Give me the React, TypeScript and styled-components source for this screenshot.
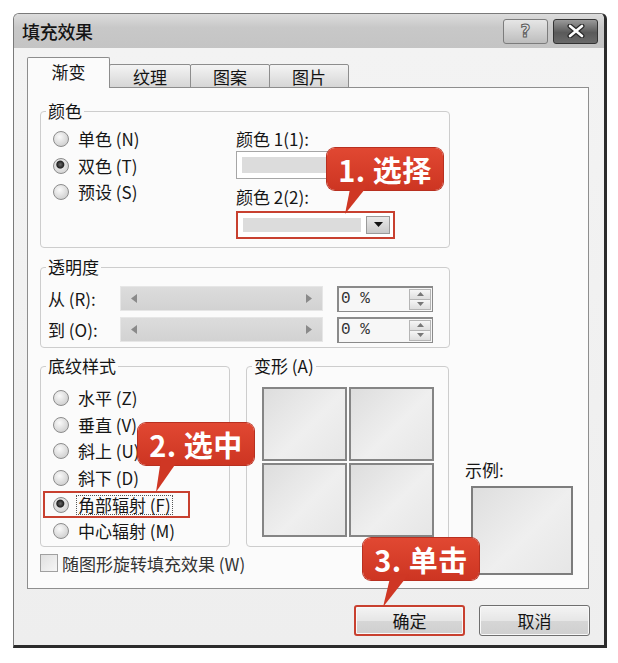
import React from 'react'
import styled, { createGlobalStyle } from 'styled-components'

const GlobalStyle = createGlobalStyle`
  html, body {
    margin: 0;
    padding: 0;
    background: #ffffff;
  }
  body {
    font-family: "Noto Sans CJK SC", "Noto Sans", sans-serif;
    color: #161616;
  }
  * {
    box-sizing: border-box;
  }
`

const patterns = [
  { label: '水平 (Z)' },
  { label: '垂直 (V)' },
  { label: '斜上 (U)' },
  { label: '斜下 (D)' },
  { label: '角部辐射 (F)', checked: true, highlight: true },
  { label: '中心辐射 (M)' },
]

const tabs = ['渐变', '纹理', '图案', '图片']

type CalloutProps = {
  x: number
  y: number
  tail: [number, number, number, number]
  text: string
}

const Callout = ({ x, y, tail, text }: CalloutProps) => {
  const [b1, b2, tx, ty] = tail
  return (
    <Bubble $x={x} $y={y}>
      <Tail width="60" height="80" viewBox="0 0 60 80">
        <polygon points={`${b1},36 ${b2},36 ${tx},${ty}`} fill="#cf3724" />
      </Tail>
      <BubbleText>{text}</BubbleText>
    </Bubble>
  )
}

export default function App() {
  return (
    <Page>
      <GlobalStyle />
      <Window>
        <TitleBar>
          <Title>填充效果</Title>
          <CaptionButtons>
            <HelpButton>?</HelpButton>
            <CloseButton>
              <svg width="18" height="14" viewBox="0 0 18 14">
                <path d="M3 2 L15 12 M15 2 L3 12" stroke="#2a2a2a" strokeWidth="5" strokeLinecap="round" />
                <path d="M3 2 L15 12 M15 2 L3 12" stroke="#ffffff" strokeWidth="2.6" strokeLinecap="round" />
              </svg>
            </CloseButton>
          </CaptionButtons>
        </TitleBar>

        <Client>
          <TabStrip>
            {tabs.map((t, i) => (
              <Tab key={t} $active={i === 0} $w={i === 0 ? 83 : i === 1 ? 82 : 80}>
                {t}
              </Tab>
            ))}
          </TabStrip>

          <Panel>
            <Field>
              <Legend>颜色</Legend>
              <ColorBody>
                <RadioList>
                  <RadioRow>
                    <Radio />
                    <span>单色 (N)</span>
                  </RadioRow>
                  <RadioRow>
                    <Radio $checked />
                    <span>双色 (T)</span>
                  </RadioRow>
                  <RadioRow>
                    <Radio />
                    <span>预设 (S)</span>
                  </RadioRow>
                </RadioList>
                <ColorColumn>
                  <SmallLabel>颜色 1(1):</SmallLabel>
                  <ColorBox>
                    <ColorFill />
                  </ColorBox>
                  <SmallLabel $gap>颜色 2(2):</SmallLabel>
                  <ColorBox $highlight>
                    <ColorFill />
                    <DropButton>
                      <svg width="9" height="6" viewBox="0 0 9 6">
                        <polygon points="0,0 9,0 4.5,5" fill="#111" />
                      </svg>
                    </DropButton>
                  </ColorBox>
                </ColorColumn>
              </ColorBody>
            </Field>

            <Field>
              <Legend>透明度</Legend>
              <AlphaBody>
                {['从 (R):', '到 (O):'].map((l) => (
                  <AlphaRow key={l}>
                    <AlphaLabel>{l}</AlphaLabel>
                    <Slider>
                      <svg width="6" height="9" viewBox="0 0 6 9">
                        <polygon points="6,0 6,9 0,4.5" fill="#8a8a8a" />
                      </svg>
                      <svg width="6" height="9" viewBox="0 0 6 9">
                        <polygon points="0,0 0,9 6,4.5" fill="#8a8a8a" />
                      </svg>
                    </Slider>
                    <Spin>
                      <SpinValue>0 %</SpinValue>
                      <SpinArrows>
                        <SpinHalf>
                          <svg width="7" height="4" viewBox="0 0 7 4">
                            <polygon points="0,4 7,4 3.5,0" fill="#777" />
                          </svg>
                        </SpinHalf>
                        <SpinHalf>
                          <svg width="7" height="4" viewBox="0 0 7 4">
                            <polygon points="0,0 7,0 3.5,4" fill="#777" />
                          </svg>
                        </SpinHalf>
                      </SpinArrows>
                    </Spin>
                  </AlphaRow>
                ))}
              </AlphaBody>
            </Field>

            <BottomGrid>
              <Field $area="pattern">
                <Legend>底纹样式</Legend>
                <PatternBody>
                  {patterns.map((p) => (
                    <RadioRow key={p.label} $highlight={p.highlight} $h={26.6}>
                      <Radio $checked={p.checked} />
                      <FocusText $focus={p.checked}>{p.label}</FocusText>
                    </RadioRow>
                  ))}
                </PatternBody>
              </Field>

              <Field $area="shape">
                <Legend>变形 (A)</Legend>
                <ShapeGrid>
                  <Variant />
                  <Variant />
                  <Variant />
                  <Variant />
                </ShapeGrid>
              </Field>

              <SampleColumn>
                <SampleLabel>示例:</SampleLabel>
                <SampleBox />
              </SampleColumn>

              <CheckRow>
                <CheckBox />
                <span>随图形旋转填充效果 (W)</span>
              </CheckRow>
            </BottomGrid>
          </Panel>

          <ButtonRow>
            <DialogButton $highlight>确定</DialogButton>
            <DialogButton>取消</DialogButton>
          </ButtonRow>
        </Client>

        <Callout x={313} y={134} tail={[24, 42, 18, 66]} text="1. 选择" />
        <Callout x={124} y={409} tail={[23, 41, 18, 69]} text="2. 选中" />
        <Callout x={349} y={524} tail={[28, 46, 20, 69]} text="3. 单击" />
      </Window>
    </Page>
  )
}

const Page = styled.div`
  width: 618px;
  height: 663px;
  padding: 13px 11px 15px 13px;
`

const Window = styled.div`
  position: relative;
  width: 594px;
  height: 635px;
  display: flex;
  flex-direction: column;
  border: 1px solid #7a7a7a;
  border-right: 3px solid #2c2c2c;
  border-bottom: 3px solid #2c2c2c;
  border-radius: 6px 6px 0 0;
  background: #efefef;
`

const TitleBar = styled.div`
  height: 34px;
  flex: none;
  display: flex;
  align-items: center;
  justify-content: space-between;
  padding: 0 6px 0 8px;
  border-radius: 5px 5px 0 0;
  background: linear-gradient(#dcdcdc 0%, #c8c8c8 40%, #c4c4c4 100%);
`

const Title = styled.div`
  font-size: 18px;
  font-weight: 500;
  color: #141414;
  letter-spacing: -0.3px;
`

const CaptionButtons = styled.div`
  display: flex;
  gap: 5px;
`

const CaptionButton = styled.div`
  width: 45px;
  height: 25px;
  display: flex;
  align-items: center;
  justify-content: center;
  border-radius: 3px;
`

const HelpButton = styled(CaptionButton)`
  border: 1px solid #7c7c7c;
  background: linear-gradient(#e6e6e6, #bdbdbd);
  font-family: "DejaVu Sans", sans-serif;
  font-size: 17px;
  font-weight: 700;
  color: #e2e2e2;
  -webkit-text-stroke: 1px #5a5a5a;
`

const CloseButton = styled(CaptionButton)`
  border: 1px solid #333;
  background: linear-gradient(#9a9a9a, #5a5a5a 55%, #6a6a6a);
`

const Client = styled.div`
  flex: 1;
  display: flex;
  flex-direction: column;
  padding: 10px 14px 8px 13px;
  background: linear-gradient(#f3f3f3, #eeeeee);
`

const TabStrip = styled.div`
  display: flex;
  align-items: flex-end;
  height: 30px;
  margin-bottom: -1px;
  position: relative;
  z-index: 1;
`

const Tab = styled.div<{ $active?: boolean; $w: number }>`
  width: ${(p) => p.$w}px;
  height: ${(p) => (p.$active ? 31 : 24)}px;
  display: flex;
  align-items: center;
  justify-content: center;
  font-size: 17px;
  color: #141414;
  border: 1px solid #8d8d8d;
  border-bottom: ${(p) => (p.$active ? 'none' : '1px solid #8d8d8d')};
  margin-left: ${(p) => (p.$active ? 0 : -1)}px;
  background: ${(p) => (p.$active ? '#fbfbfb' : 'linear-gradient(#f4f4f4, #d6d6d6)')};
  padding-bottom: ${(p) => (p.$active ? 4 : 0)}px;
  border-radius: 2px 2px 0 0;
`

const Panel = styled.div`
  width: 562px;
  height: 502px;
  display: flex;
  flex-direction: column;
  padding: 14px 0 13px 12px;
  border: 1px solid #8e8e8e;
  background: #fbfbfb;
  font-size: 17px;
  color: #161616;
  & > fieldset:nth-child(2) {
    margin-top: 10px;
  }
`

const Field = styled.fieldset<{ $area?: string }>`
  margin: 0;
  padding: 0;
  min-width: 0;
  width: 410px;
  border: 1px solid #cdcdcd;
  border-radius: 4px;
  ${(p) => (p.$area ? `grid-area: ${p.$area}; width: auto;` : '')}
`

const Legend = styled.legend`
  margin-left: 5px;
  padding: 0 2px;
  font-size: 17px;
  line-height: 18px;
  color: #141414;
`

const ColorBody = styled.div`
  display: grid;
  grid-template-columns: 183px 159px;
  padding: 6px 0 8px 12px;
`

const RadioList = styled.div`
  display: flex;
  flex-direction: column;
`

const RadioRow = styled.div<{ $highlight?: boolean; $h?: number }>`
  height: ${(p) => p.$h ?? 26.5}px;
  display: flex;
  align-items: center;
  gap: 9px;
  line-height: 18px;
  ${(p) =>
    p.$highlight
      ? `
    margin-left: -10px;
    padding-left: 10px;
    width: 147px;
    box-shadow: inset 0 0 0 2px #c8402f;
  `
      : ''}
`

const Radio = styled.span<{ $checked?: boolean }>`
  width: 16px;
  height: 16px;
  flex: none;
  border-radius: 50%;
  border: 1px solid #8c8c8c;
  background: ${(p) =>
    p.$checked
      ? 'radial-gradient(circle at 45% 40%, #6a6a6a 0, #222 3.5px, #e4e4e4 4.5px, #c9c9c9 100%)'
      : 'radial-gradient(circle at 40% 35%, #fafafa 0, #d4d4d4 70%, #c4c4c4 100%)'};
`

const FocusText = styled.span<{ $focus?: boolean }>`
  padding: 0 1px;
  border: 1px dotted ${(p) => (p.$focus ? '#555' : 'transparent')};
  margin-left: -2px;
`

const ColorColumn = styled.div`
  display: flex;
  flex-direction: column;
  padding-top: 4px;
`

const SmallLabel = styled.div<{ $gap?: boolean }>`
  line-height: 18px;
  margin: ${(p) => (p.$gap ? '9px 0 5px' : '0 0 3px')};
`

const ColorBox = styled.div<{ $highlight?: boolean }>`
  height: 28px;
  width: 159px;
  display: flex;
  align-items: stretch;
  gap: 3px;
  padding: 3px;
  background: #fff;
  border: ${(p) => (p.$highlight ? '2px solid #c8402f' : '1px solid #a6a6a6')};
`

const ColorFill = styled.div`
  flex: 1;
  margin: 2px;
  background: #dcdcdc;
`

const DropButton = styled.div`
  width: 24px;
  display: flex;
  align-items: center;
  justify-content: center;
  border: 1px solid #9a9a9a;
  background: linear-gradient(#e9e9e9, #c9c9c9);
`

const AlphaBody = styled.div`
  display: flex;
  flex-direction: column;
  gap: 6px;
  padding: 10px 0 5px 7px;
`

const AlphaRow = styled.div`
  height: 25px;
  display: flex;
  align-items: center;
`

const AlphaLabel = styled.span`
  width: 72px;
  flex: none;
`

const Slider = styled.div`
  width: 203px;
  height: 25px;
  display: flex;
  align-items: center;
  justify-content: space-between;
  padding: 0 10px;
  background: linear-gradient(#dcdcdc, #d2d2d2);
  border: 1px solid #e6e6e6;
`

const Spin = styled.div`
  width: 96px;
  height: 26px;
  margin-left: 14px;
  display: flex;
  align-items: stretch;
  border: 2px solid #8a8a8a;
  border-right-width: 1px;
  border-bottom-width: 1px;
  background: #f7f7f7;
`

const SpinValue = styled.span`
  flex: 1;
  padding-left: 2px;
  font-family: "Liberation Mono", monospace;
  font-size: 16px;
  line-height: 22px;
  color: #333;
`

const SpinArrows = styled.div`
  width: 22px;
  display: flex;
  flex-direction: column;
  margin: 1px;
  border: 1px solid #b5b5b5;
`

const SpinHalf = styled.div`
  flex: 1;
  display: flex;
  align-items: center;
  justify-content: center;
  background: linear-gradient(#f6f6f6, #dedede);
  & + & {
    border-top: 1px solid #b5b5b5;
  }
`

const BottomGrid = styled.div`
  margin-top: 9px;
  width: 533px;
  display: grid;
  grid-template-columns: 190px 203px 1fr;
  grid-template-rows: 190px 28px;
  column-gap: 16px;
  grid-template-areas:
    'pattern shape sample'
    'check check sample';
`

const PatternBody = styled.div`
  display: flex;
  flex-direction: column;
  padding: 10px 0 0 12px;
`

const ShapeGrid = styled.div`
  display: grid;
  grid-template-columns: 85px 85px;
  grid-template-rows: 74px 74px;
  gap: 2px;
  padding: 12px 0 0 15px;
`

const Variant = styled.div`
  border: 2px solid #858585;
  background: linear-gradient(135deg, #dddddd 0%, #efefef 55%, #e6e6e6 100%);
`

const SampleColumn = styled.div`
  grid-area: sample;
  display: flex;
  flex-direction: column;
  justify-content: flex-end;
`

const SampleLabel = styled.div`
  line-height: 18px;
  margin-bottom: 7px;
`

const SampleBox = styled.div`
  width: 102px;
  height: 89px;
  margin-left: 6px;
  border: 2px solid #7d7d7d;
  background: linear-gradient(135deg, #dedede 0%, #efefef 55%, #e6e6e6 100%);
`

const CheckRow = styled.div`
  grid-area: check;
  display: flex;
  align-items: center;
  gap: 4px;
  padding-top: 4px;
  color: #333;
`

const CheckBox = styled.span`
  width: 18px;
  height: 18px;
  border: 1px solid #a0a0a0;
  background: linear-gradient(135deg, #e0e0e0, #f6f6f6);
`

const ButtonRow = styled.div`
  display: flex;
  justify-content: flex-end;
  gap: 14px;
  margin-top: 16px;
`

const DialogButton = styled.div<{ $highlight?: boolean }>`
  width: 111px;
  height: 31px;
  display: flex;
  align-items: center;
  justify-content: center;
  font-size: 17px;
  color: #141414;
  border-radius: 3px;
  border: ${(p) => (p.$highlight ? '2px solid #c8402f' : '1px solid #6f6f6f')};
  box-shadow: inset 0 0 0 1px #f8f8f8;
  background: linear-gradient(#f4f4f4 0%, #e6e6e6 50%, #d6d6d6 51%, #cfcfcf 100%);
`

const Bubble = styled.div<{ $x: number; $y: number }>`
  position: absolute;
  left: ${(p) => p.$x}px;
  top: ${(p) => p.$y}px;
  width: 116px;
  height: 42px;
  border-radius: 8px;
  background: linear-gradient(#e14832, #cd3522);
  box-shadow: 0 0 0 1px #b83020;
  display: flex;
  align-items: center;
  justify-content: center;
  z-index: 5;
`

const Tail = styled.svg`
  position: absolute;
  left: 0;
  top: 0;
  overflow: visible;
`

const BubbleText = styled.span`
  position: relative;
  font-family: "Noto Sans CJK SC", "Noto Sans", sans-serif;
  font-weight: 700;
  font-size: 29px;
  line-height: 1;
  color: #fff;
  letter-spacing: 0.5px;
`
